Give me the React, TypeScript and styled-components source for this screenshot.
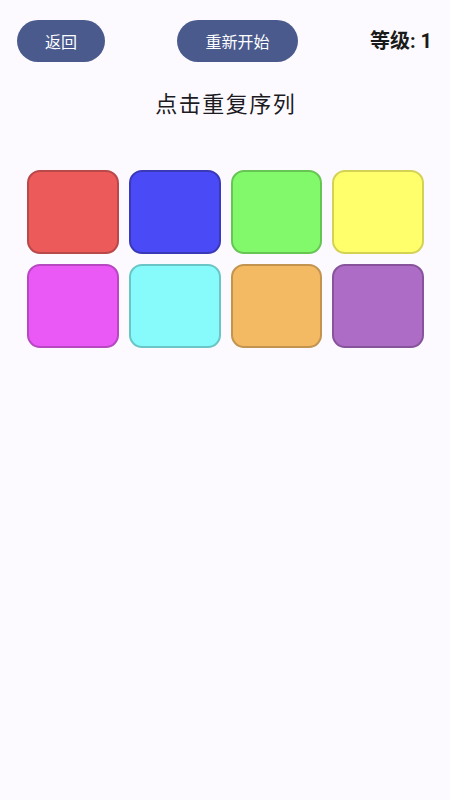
import React from "react";
import styled, { createGlobalStyle } from "styled-components";

const Global = createGlobalStyle`
  html, body { margin: 0; padding: 0; background: #fcfaff; }
  body { font-family: "Noto Sans CJK SC", "Noto Sans", Roboto, sans-serif; }
`;

const Page = styled.div`
  width: 450px;
  min-height: 800px;
  background: #fcfaff;
  display: flex;
  flex-direction: column;
`;

const Header = styled.div`
  display: flex;
  align-items: center;
  justify-content: space-between;
  padding: 20px 18px 0 17px;
`;

const PillButton = styled.button<{ $w: number }>`
  width: ${(p) => p.$w}px;
  height: 42px;
  border: none;
  border-radius: 21px;
  background: #4a5a8d;
  color: #ffffff;
  font-family: "Noto Sans CJK SC", sans-serif;
  font-size: 16px;
  padding: 0;
  display: flex;
  align-items: center;
  justify-content: center;
`;

const Level = styled.div`
  font-family: Roboto, "Noto Sans CJK SC", sans-serif;
  font-weight: 700;
  font-size: 20px;
  color: #1a1a1a;
  line-height: 42px;
`;

const Title = styled.div`
  margin-top: 25px;
  padding-left: 1.5px;
  text-align: center;
  font-family: "Noto Sans CJK SC", sans-serif;
  font-size: 22px;
  letter-spacing: 1.5px;
  color: #1c1b1f;
  line-height: 30px;
`;

const Grid = styled.div`
  margin: 53px 26px 0 27px;
  display: grid;
  grid-template-columns: repeat(4, 1fr);
  column-gap: 10px;
  row-gap: 10px;
`;

const Tile = styled.div<{ $bg: string; $bd: string }>`
  height: 84px;
  box-sizing: border-box;
  border-radius: 13px;
  background: ${(p) => p.$bg};
  border: 2px solid ${(p) => p.$bd};
`;

const tiles = [
  { bg: "#ec5a5a", bd: "#b94848" },
  { bg: "#4a4af6", bd: "#3a3ab8" },
  { bg: "#82f96a", bd: "#67c554" },
  { bg: "#ffff6c", bd: "#d3d255" },
  { bg: "#ea58f6", bd: "#b748c2" },
  { bg: "#87fbfb", bd: "#6ac6c6" },
  { bg: "#f3b963", bd: "#c2944f" },
  { bg: "#ad6dc6", bd: "#87539b" },
];

export default function App() {
  return (
    <Page>
      <Global />
      <Header>
        <PillButton $w={88}>返回</PillButton>
        <PillButton $w={121}>重新开始</PillButton>
        <Level>等级: 1</Level>
      </Header>
      <Title>点击重复序列</Title>
      <Grid>
        {tiles.map((t, i) => (
          <Tile key={i} $bg={t.bg} $bd={t.bd} />
        ))}
      </Grid>
    </Page>
  );
}
